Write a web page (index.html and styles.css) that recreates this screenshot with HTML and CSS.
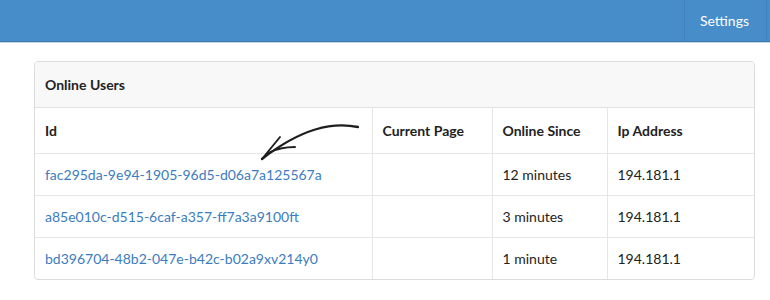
FILE: index.html
```html
<!DOCTYPE html>
<html>
<head>
<meta charset="utf-8">
<link rel="stylesheet" href="styles.css">
</head>
<body>
<nav class="navbar">
  <div class="nav-spacer"></div>
  <a class="nav-item">Settings</a>
</nav>
<main class="content">
  <section class="card">
    <div class="card-header">Online Users</div>
    <div class="table-wrap">
      <table class="users">
        <colgroup>
          <col class="c-id"><col class="c-page"><col class="c-since"><col class="c-ip">
        </colgroup>
        <thead>
          <tr><th>Id</th><th>Current Page</th><th>Online Since</th><th>Ip Address</th></tr>
        </thead>
        <tbody>
          <tr><td><a>fac295da-9e94-1905-96d5-d06a7a125567a</a></td><td></td><td>12 minutes</td><td>194.181.1</td></tr>
          <tr><td><a>a85e010c-d515-6caf-a357-ff7a3a9100ft</a></td><td></td><td>3 minutes</td><td>194.181.1</td></tr>
          <tr><td><a>bd396704-48b2-047e-b42c-b02a9xv214y0</a></td><td></td><td>1 minute</td><td>194.181.1</td></tr>
        </tbody>
      </table>
      <svg class="arrow" width="112" height="48" viewBox="0 0 112 48">
        <path d="M106 11 C 80 6, 50 12, 10 43" fill="none" stroke="#1e1e1e" stroke-width="2.3" stroke-linecap="round"/>
        <path d="M10 43 L 28 21" fill="none" stroke="#1e1e1e" stroke-width="1.9" stroke-linecap="round"/>
        <path d="M16 37 C 24 33, 33 31, 43 31" fill="none" stroke="#1e1e1e" stroke-width="1.9" stroke-linecap="round"/>
      </svg>
    </div>
  </section>
</main>
</body>
</html>
```
FILE: styles.css
```css
* { box-sizing: border-box; }
body {
  margin: 0;
  font-family: Lato, "Open Sans", sans-serif;
  color: #222;
  background: #fff;
}
.navbar {
  display: flex;
  height: 42px;
  background: #468dc9;
  border-bottom: 1px solid #3b78b0;
  box-shadow: 0 1px 0 #c9d6e4;
}
.nav-spacer { flex: 1; }
.nav-item {
  display: flex;
  align-items: center;
  padding: 0 17px 0 15px;
  border-left: 1px solid #3f82bd;
  border-right: 1px solid #3f82bd;
  margin-right: 3px;
  color: #fff;
  font-size: 14px;
}
.content {
  padding: 19px 15px 0 34px;
}
.card {
  border: 1px solid #dcdcdc;
  border-radius: 4px;
  overflow: hidden;
}
.card-header {
  height: 46px;
  padding: 0 10px;
  display: flex;
  align-items: center;
  background: #f8f8f9;
  border-bottom: 1px solid #e3e3e3;
  font-weight: 700;
  font-size: 14px;
}
.table-wrap { position: relative; }
.users {
  width: 100%;
  border-collapse: collapse;
  table-layout: fixed;
  font-size: 14px;
}
.c-id { width: 337px; }
.c-page { width: 120px; }
.c-since { width: 115px; }
.users th, .users td {
  text-align: left;
  padding: 0 10px;
  border-left: 1px solid #e6e6e6;
  border-top: 1px solid #e6e6e6;
}
.users th:first-child, .users td:first-child { border-left: none; }
.users thead tr:first-child th { border-top: none; }
.users th { height: 45px; font-weight: 700; }
.users td { height: 42px; }
.users a { color: #3c7cc0; text-decoration: none; }
.arrow {
  position: absolute;
  left: 217px;
  top: 8px;
}
```
